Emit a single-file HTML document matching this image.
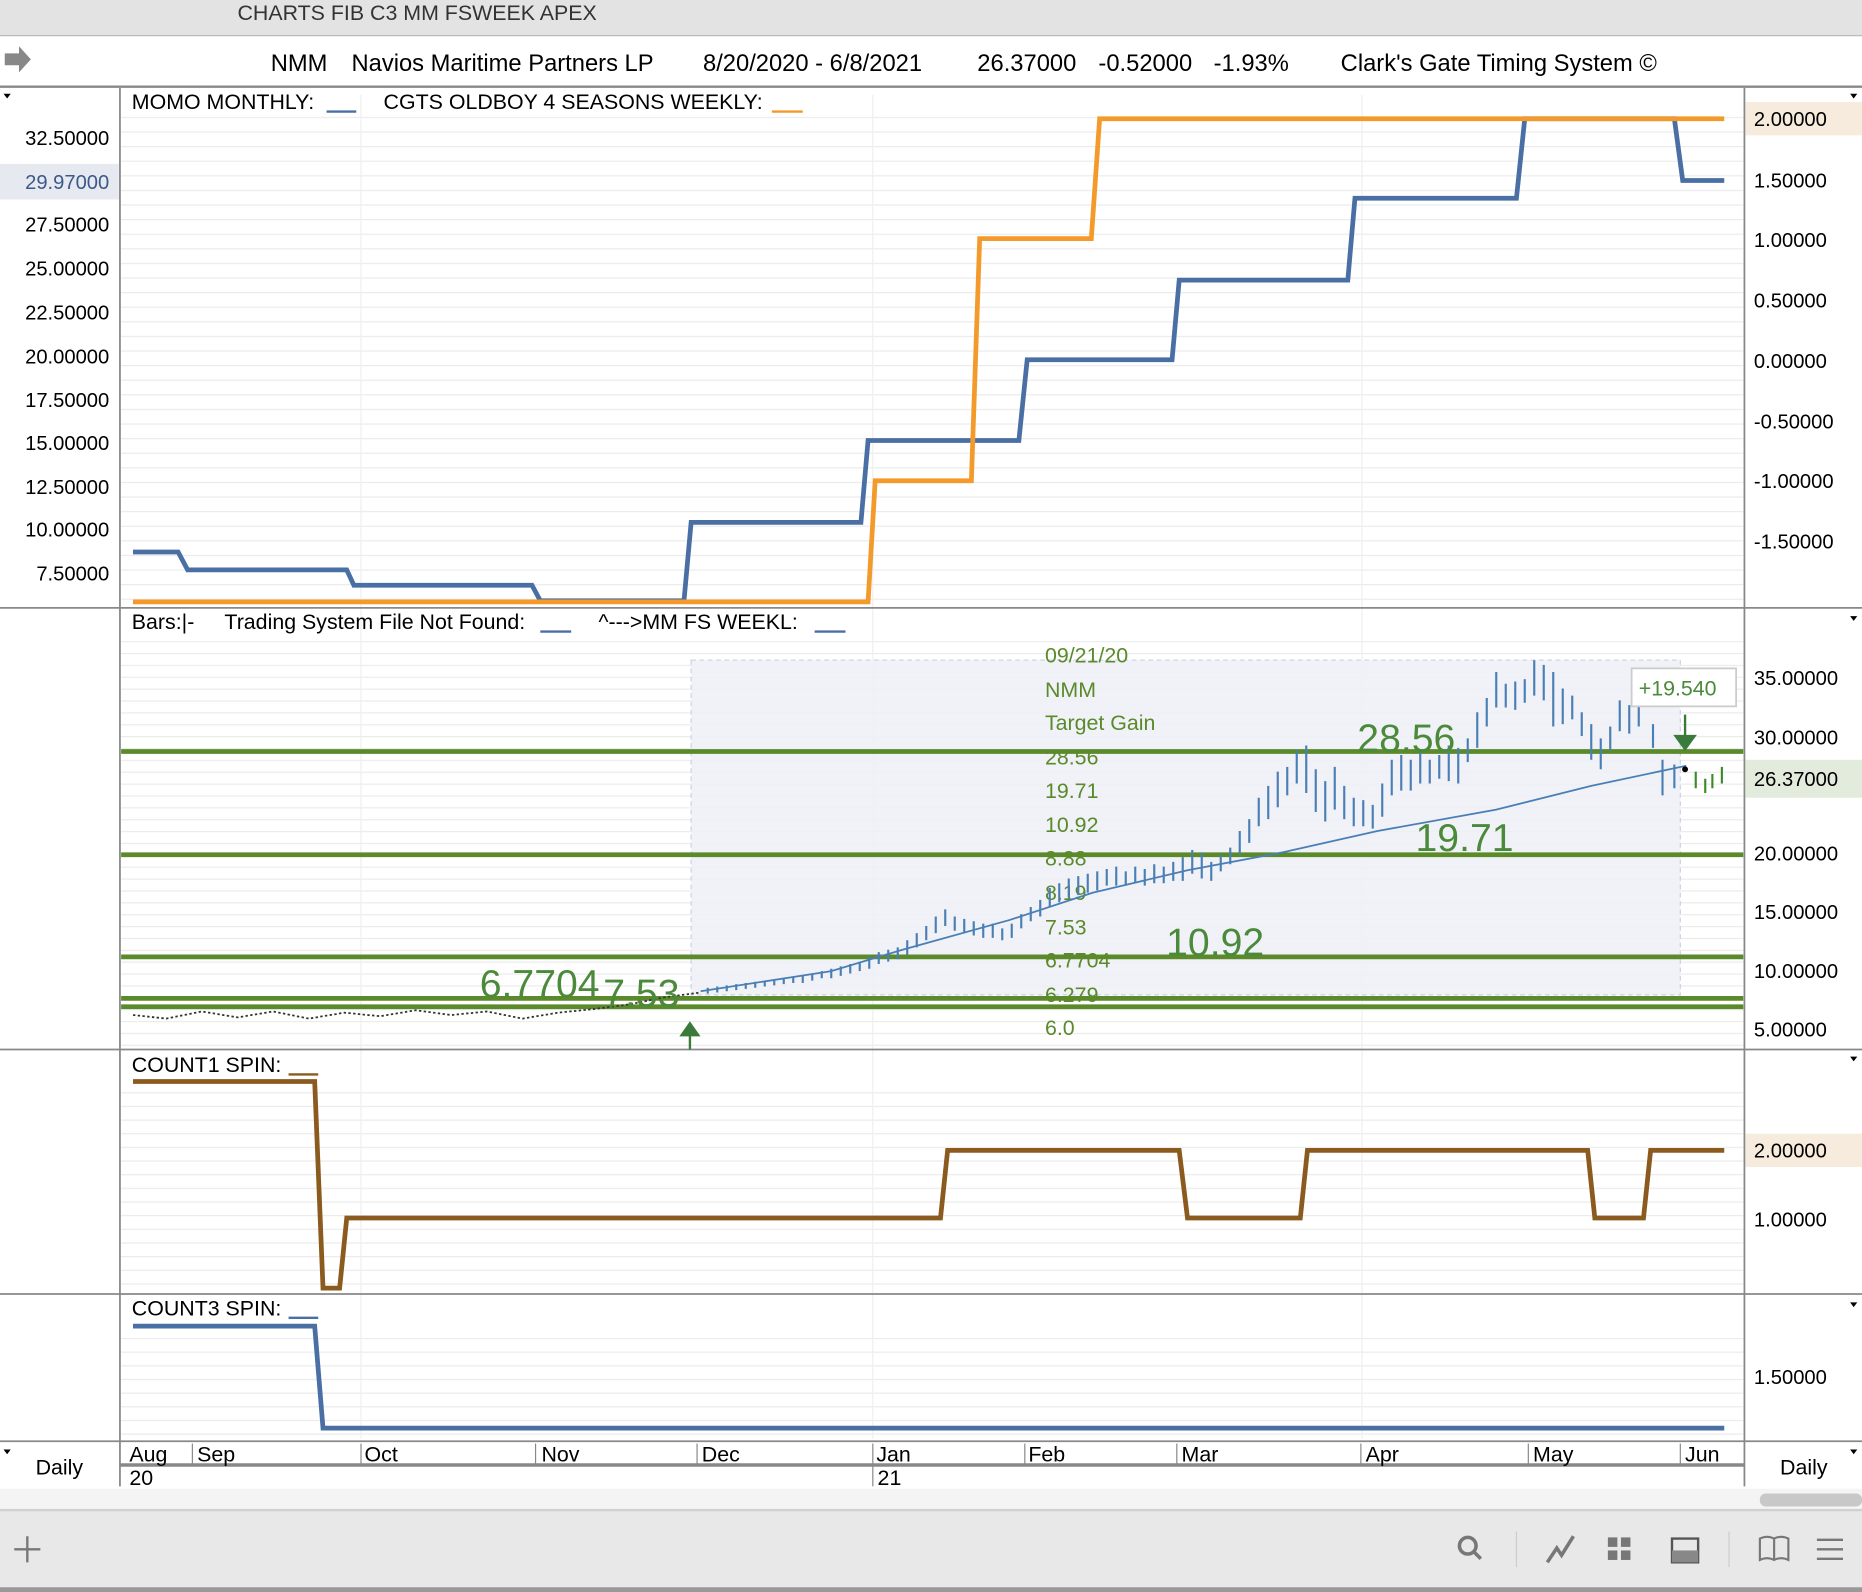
<!DOCTYPE html>
<html><head><meta charset="utf-8"><style>
html,body{margin:0;padding:0;background:#fff;}
svg{display:block;font-family:"Liberation Sans",sans-serif;}
</style></head><body>
<svg width="1862" height="1592" viewBox="0 0 1568 1341" preserveAspectRatio="none" xmlns="http://www.w3.org/2000/svg">
<defs>
<pattern id="g1" width="10" height="12.3" patternUnits="userSpaceOnUse"><line x1="0" y1="0.5" x2="10" y2="0.5" stroke="#ebebeb"/></pattern>
<pattern id="g2" width="10" height="10" patternUnits="userSpaceOnUse"><line x1="0" y1="0.5" x2="10" y2="0.5" stroke="#ebebeb"/></pattern>
<pattern id="g3" width="10" height="11.5" patternUnits="userSpaceOnUse"><line x1="0" y1="0.5" x2="10" y2="0.5" stroke="#ebebeb"/></pattern>
</defs>
<rect width="1568" height="1341" fill="#fff"/>
<rect x="102" y="90" width="1366" height="420" fill="url(#g1)"/>
<rect x="102" y="540" width="1366" height="342" fill="url(#g2)"/>
<rect x="102" y="915" width="1366" height="173" fill="url(#g3)"/>
<rect x="102" y="1120" width="1366" height="92" fill="url(#g3)"/>
<!-- title bar -->
<rect x="0" y="0" width="1568" height="30" fill="#e3e3e3"/>
<line x1="0" y1="30" x2="1568" y2="30" stroke="#bbb"/>
<text x="200" y="17" font-size="18" fill="#333">CHARTS FIB C3 MM FSWEEK APEX</text>
<path d="M4 45h12v-6l10 11-10 11v-6h-12z" fill="#888"/>
<g font-size="20" fill="#000">
<text x="228" y="60">NMM</text><text x="296" y="60">Navios Maritime Partners LP</text>
<text x="592" y="60">8/20/2020 - 6/8/2021</text><text x="823" y="60">26.37000</text>
<text x="925" y="60">-0.52000</text><text x="1022" y="60">-1.93%</text>
<text x="1129" y="60">Clark's Gate Timing System ©</text></g>
<line x1="0" y1="73" x2="1568" y2="73" stroke="#888" stroke-width="2"/>
<g stroke="#eee"><line x1="304" y1="80" x2="304" y2="1212"/><line x1="735" y1="80" x2="735" y2="1212"/><line x1="1147" y1="80" x2="1147" y2="1212"/></g>
<g stroke="#888" stroke-width="1.5">
<line x1="101" y1="74" x2="101" y2="1252"/><line x1="1469" y1="74" x2="1469" y2="1252"/>
<line x1="0" y1="512" x2="1568" y2="512"/><line x1="0" y1="884" x2="1568" y2="884"/>
<line x1="0" y1="1090" x2="1568" y2="1090"/><line x1="0" y1="1214" x2="1568" y2="1214"/>
<line x1="101" y1="1234" x2="1469" y2="1234" stroke-width="3"/>
</g>
<!-- panel1 -->
<g font-size="18" fill="#000">
<text x="111" y="92">MOMO MONTHLY:</text><line x1="275" y1="94" x2="300" y2="94" stroke="#4a6fa5" stroke-width="2"/>
<text x="323" y="92">CGTS OLDBOY 4 SEASONS WEEKLY:</text><line x1="650" y1="94" x2="676" y2="94" stroke="#f39a2a" stroke-width="2"/>
</g>
<g font-size="17" fill="#000" text-anchor="end">
<text x="92" y="122">32.50000</text><text x="92" y="195">27.50000</text><text x="92" y="232">25.00000</text>
<text x="92" y="269">22.50000</text><text x="92" y="306">20.00000</text><text x="92" y="343">17.50000</text>
<text x="92" y="379">15.00000</text><text x="92" y="416">12.50000</text><text x="92" y="452">10.00000</text><text x="92" y="489">7.50000</text>
</g>
<rect x="0" y="138" width="100" height="30" fill="#e6e9ef"/>
<text x="92" y="159" font-size="17" fill="#3a5a8a" text-anchor="end">29.97000</text>
<g font-size="17" fill="#000">
<text x="1477" y="158">1.50000</text><text x="1477" y="208">1.00000</text><text x="1477" y="259">0.50000</text>
<text x="1477" y="310">0.00000</text><text x="1477" y="361">-0.50000</text><text x="1477" y="411">-1.00000</text><text x="1477" y="462">-1.50000</text>
</g>
<rect x="1470" y="86" width="98" height="28" fill="#f6ebdc"/>
<text x="1477" y="106" font-size="17" fill="#000">2.00000</text>
<polyline fill="none" stroke="#4a6fa5" stroke-width="4" points="112,465 150,465 158,480 292,480 298,493 448,493 455,506 576,506 582,440 725,440 731,371 858,371 865,303 987,303 993,236 1135,236 1141,167 1277,167 1284,100 1410,100 1417,152 1452,152"/>
<polyline fill="none" stroke="#f39a2a" stroke-width="4" points="112,507 731,507 737,405 818,405 825,201 919,201 926,100 1452,100"/>
<!-- panel2 -->
<g font-size="18" fill="#000">
<text x="111" y="530">Bars:|-</text><text x="189" y="530">Trading System File Not Found:</text>
<line x1="455" y1="532" x2="481" y2="532" stroke="#4a6fa5" stroke-width="2"/>
<text x="504" y="530">^---&gt;MM FS WEEKL:</text><line x1="686" y1="532" x2="712" y2="532" stroke="#4a6fa5" stroke-width="2"/>
</g>
<rect x="582" y="556" width="833" height="282" fill="#eef0f7" fill-opacity="0.85" stroke="#c8d2e4" stroke-dasharray="4 3"/>
<g fill="#5a8a2a" font-size="18">
<text x="880" y="558">09/21/20</text><text x="880" y="587">NMM</text><text x="880" y="615">Target Gain</text>
<text x="880" y="644">28.56</text><text x="880" y="672">19.71</text><text x="880" y="701">10.92</text>
<text x="880" y="729">8.88</text><text x="880" y="758">8.19</text><text x="880" y="787">7.53</text>
<text x="880" y="815">6.7704</text><text x="880" y="844">6.279</text><text x="880" y="872">6.0</text>
</g>
<g stroke="#5a8a2a" stroke-width="4">
<line x1="102" y1="633" x2="1468" y2="633"/><line x1="102" y1="720" x2="1468" y2="720"/>
<line x1="102" y1="806" x2="1468" y2="806"/><line x1="102" y1="841" x2="1468" y2="841"/><line x1="102" y1="848" x2="1468" y2="848"/>
</g>
<polyline fill="none" stroke="#333" stroke-width="1.5" stroke-dasharray="2 2" points="112,855 140,858 170,852 200,857 230,852 260,858 290,853 320,856 350,851 380,855 410,852 440,858 470,853 500,850 530,846 560,840 590,836"/>
<path fill="none" stroke="#4a7fb5" stroke-width="1.8" d="M596 832v5 M604 831v5 M612 830v5 M620 829v5 M628 828v5 M636 827v5 M644 826v5 M652 825v5 M660 824v5 M668 823v5 M676 822v6 M684 820v6 M692 818v6 M700 816v8 M708 814v8 M716 812v8 M724 810v8 M732 806v10 M740 802v10 M748 800v10 M756 798v10 M764 792v12 M772 786v12 M780 780v12 M788 772v14 M796 766v14 M804 772v12 M812 774v12 M820 776v12 M828 778v12 M836 778v12 M844 782v10 M852 778v12 M860 770v12 M868 764v12 M876 758v14 M884 748v16 M892 744v16 M900 740v16 M908 738v16 M916 736v16 M924 734v16 M932 732v14 M940 730v16 M948 734v12 M956 730v14 M964 732v14 M972 728v16 M980 730v14 M988 726v16 M996 722v20 M1004 716v20 M1012 718v22 M1020 726v16 M1028 720v14 M1036 714v14 M1044 700v20 M1052 690v20 M1060 672v24 M1068 662v28 M1076 650v30 M1084 646v24 M1092 632v28 M1100 628v40 M1108 648v36 M1116 658v34 M1124 646v36 M1132 662v28 M1140 672v24 M1148 674v22 M1156 678v20 M1164 660v28 M1172 640v30 M1180 636v30 M1188 640v26 M1196 634v26 M1204 640v20 M1212 636v20 M1220 628v30 M1228 630v30 M1236 622v20 M1244 600v30 M1252 588v24 M1260 566v30 M1268 576v20 M1276 574v24 M1284 572v20 M1292 556v30 M1300 560v30 M1308 566v46 M1316 580v30 M1324 586v20 M1332 600v20 M1340 610v30 M1348 622v26 M1356 612v20 M1364 590v26 M1372 594v24 M1380 588v24 M1392 610v20 M1400 640v30 M1410 644v20"/>
<path fill="none" stroke="#3a8a2a" stroke-width="1.8" d="M1428 650v14 M1436 656v12 M1442 652v12 M1450 646v14"/>
<polyline fill="none" stroke="#4a7fb5" stroke-width="1.5" points="590,835 700,818 760,800 850,775 920,752 1000,733 1080,718 1160,700 1260,682 1340,662 1420,645"/>
<circle cx="1419" cy="648" r="2.5" fill="#000"/>
<g fill="#4a8a3a" font-size="33">
<text x="404" y="840">6.7704</text><text x="508" y="848">7.53</text>
<text x="982" y="805">10.92</text><text x="1192" y="717">19.71</text><text x="1143" y="633">28.56</text></g>
<path d="M581 884v-18M574 872l7-10 7 10z" stroke="#3a7a3a" stroke-width="2" fill="#3a7a3a"/>
<path d="M1419 602v22M1411 620l8 11 8-11z" stroke="#3a7a3a" stroke-width="2" fill="#3a7a3a"/>
<rect x="1374" y="563" width="88" height="32" fill="#fff" stroke="#ccc" stroke-width="1.5"/>
<text x="1380" y="586" font-size="18" fill="#4a8a3a">+19.540</text>
<g font-size="17" fill="#000">
<text x="1477" y="577">35.00000</text><text x="1477" y="627">30.00000</text><text x="1477" y="725">20.00000</text>
<text x="1477" y="774">15.00000</text><text x="1477" y="824">10.00000</text><text x="1477" y="873">5.00000</text></g>
<rect x="1470" y="640" width="98" height="32" fill="#e3ecdc"/>
<text x="1477" y="662" font-size="17" fill="#000">26.37000</text>
<!-- panel3 -->
<text x="111" y="903" font-size="18">COUNT1 SPIN:</text><line x1="243" y1="905" x2="268" y2="905" stroke="#8b5a1e" stroke-width="2"/>
<rect x="1470" y="955" width="98" height="28" fill="#f6ebdc"/>
<text x="1477" y="975" font-size="17">2.00000</text><text x="1477" y="1033" font-size="17">1.00000</text>
<polyline fill="none" stroke="#8b5a1e" stroke-width="4" points="112,911 265,911 272,1085 286,1085 292,1026 792,1026 798,969 993,969 1000,1026 1095,1026 1101,969 1337,969 1343,1026 1384,1026 1390,969 1452,969"/>
<!-- panel4 -->
<text x="111" y="1108" font-size="18">COUNT3 SPIN:</text><line x1="243" y1="1110" x2="268" y2="1110" stroke="#4a6fa5" stroke-width="2"/>
<text x="1477" y="1166" font-size="17">1.50000</text>
<polyline fill="none" stroke="#4a6fa5" stroke-width="4" points="112,1117 265,1117 272,1203 1452,1203"/>
<!-- date axis -->
<g font-size="18" fill="#000">
<text x="30" y="1242">Daily</text><text x="1499" y="1242">Daily</text>
<text x="109" y="1231">Aug</text><text x="166" y="1231">Sep</text><text x="307" y="1231">Oct</text>
<text x="456" y="1231">Nov</text><text x="591" y="1231">Dec</text><text x="738" y="1231">Jan</text>
<text x="866" y="1231">Feb</text><text x="995" y="1231">Mar</text><text x="1150" y="1231">Apr</text>
<text x="1291" y="1231">May</text><text x="1419" y="1231">Jun</text>
<text x="109" y="1251">20</text><text x="739" y="1251">21</text></g>
<g stroke="#888"><line x1="162" y1="1216" x2="162" y2="1234"/><line x1="304" y1="1216" x2="304" y2="1234"/><line x1="451" y1="1216" x2="451" y2="1234"/><line x1="587" y1="1216" x2="587" y2="1234"/><line x1="735" y1="1216" x2="735" y2="1252"/><line x1="863" y1="1216" x2="863" y2="1234"/><line x1="991" y1="1216" x2="991" y2="1234"/><line x1="1146" y1="1216" x2="1146" y2="1234"/><line x1="1287" y1="1216" x2="1287" y2="1234"/><line x1="1415" y1="1216" x2="1415" y2="1234"/></g>
<path d="M3 79l6 0-3 4z M1558 79l6 0-3 4z M1558 519l6 0-3 4z M1558 890l6 0-3 4z M1558 1097l6 0-3 4z M3 1221l6 0-3 4z M1558 1221l6 0-3 4z" fill="#000"/>
<!-- bottom -->
<rect x="0" y="1254" width="1568" height="18" fill="#f4f4f4"/>
<rect x="1482" y="1258" width="86" height="11" rx="5" fill="#c8c8c8"/>
<rect x="0" y="1272" width="1568" height="69" fill="#e8e8e8"/>
<line x1="0" y1="1272" x2="1568" y2="1272" stroke="#d0d0d0" stroke-width="2"/>
<path d="M23 1294v22M12 1305h22" stroke="#777" stroke-width="2"/>
<circle cx="1236" cy="1302" r="7" fill="none" stroke="#777" stroke-width="3"/><path d="M1241 1307l6 6" stroke="#777" stroke-width="3"/>
<line x1="1277" y1="1290" x2="1277" y2="1320" stroke="#ccc"/><line x1="1456" y1="1290" x2="1456" y2="1320" stroke="#ccc"/>
<path d="M1303 1316l8-12 4 6 10-16" stroke="#777" stroke-width="3" fill="none"/>
<g fill="#777"><rect x="1354" y="1295" width="8" height="8"/><rect x="1365" y="1295" width="8" height="8"/><rect x="1354" y="1306" width="8" height="8"/><rect x="1365" y="1306" width="8" height="8"/></g>
<rect x="1408" y="1296" width="22" height="20" fill="none" stroke="#555" stroke-width="2"/><rect x="1408" y="1306" width="22" height="10" fill="#888"/>
<path d="M1482 1296v18q6-3 12 0q6-3 12 0v-18q-6-3-12 0q-6-3-12 0zM1494 1296v18" stroke="#777" stroke-width="1.8" fill="none"/>
<path d="M1530 1297h22M1530 1305h22M1530 1313h22" stroke="#777" stroke-width="2"/>
<rect x="0" y="1337" width="1568" height="4" fill="#999"/>
</svg>
</body></html>
